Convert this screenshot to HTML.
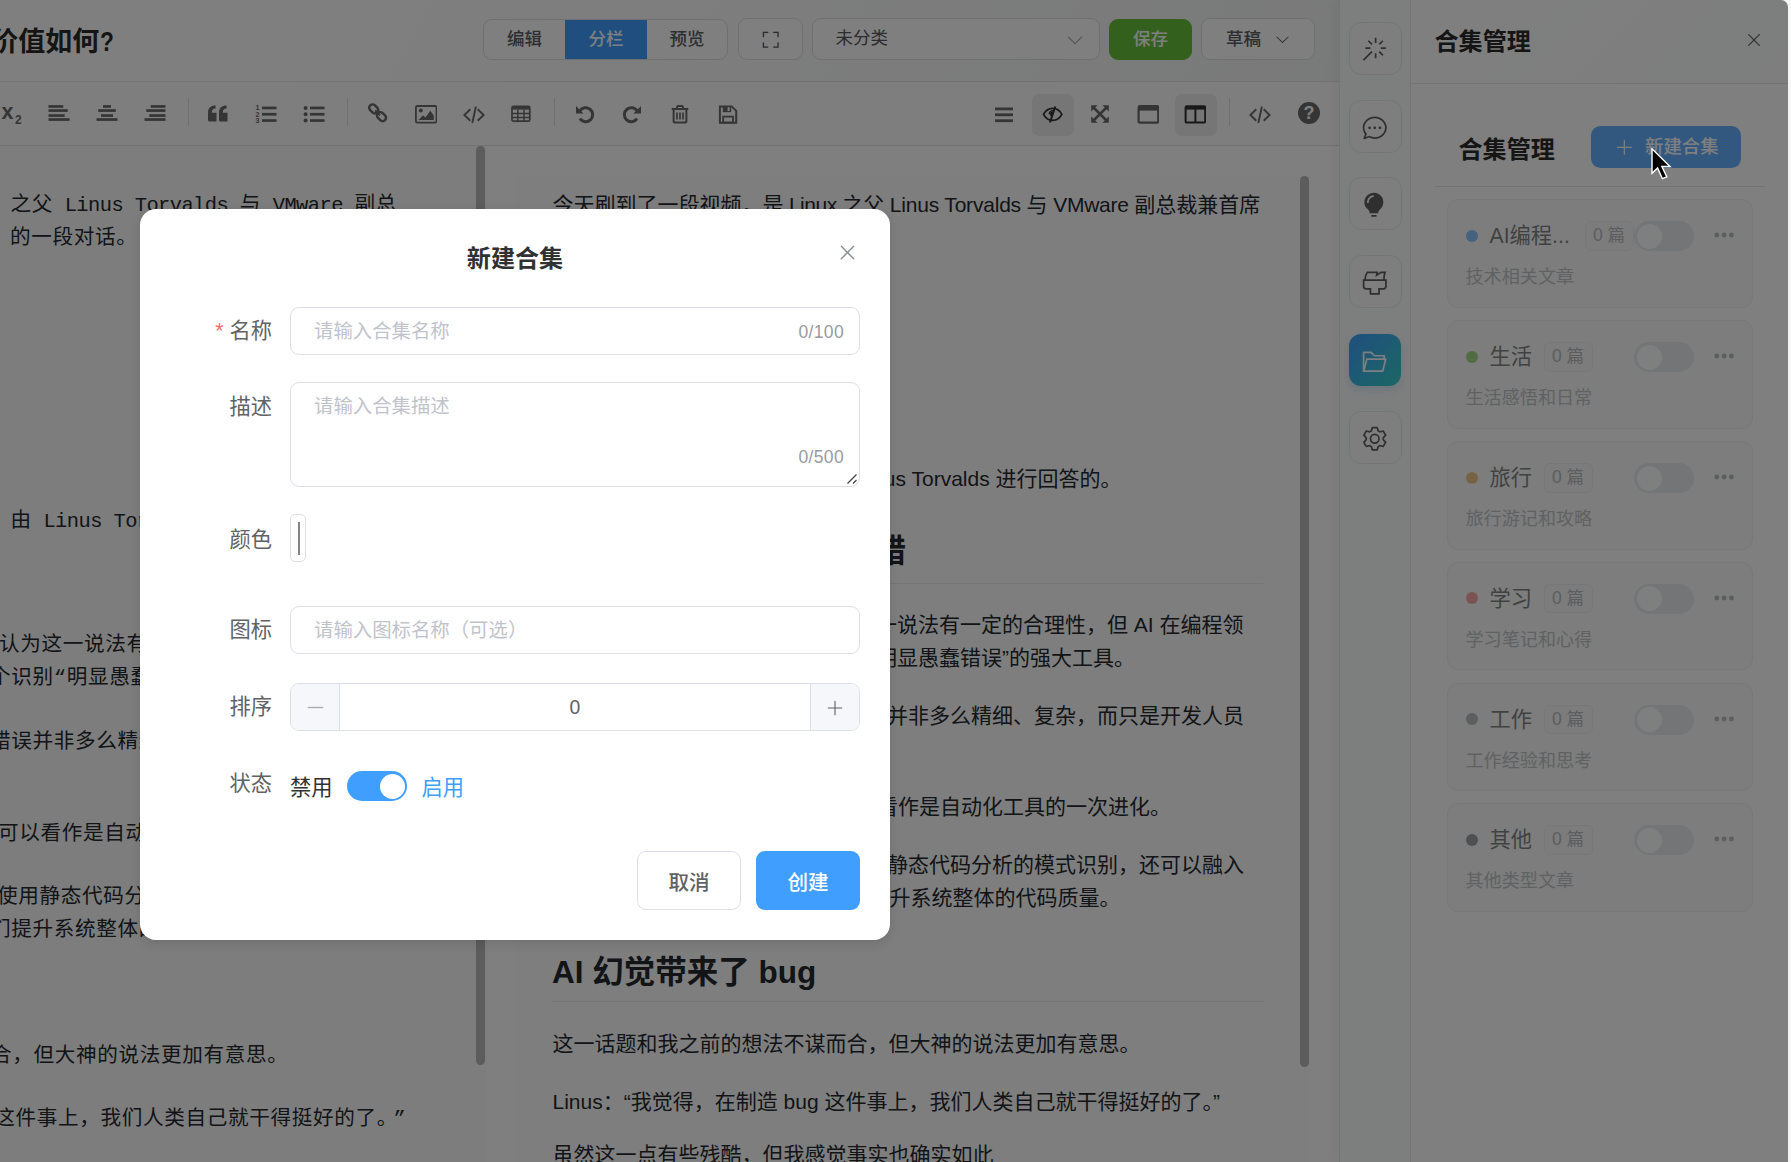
<!DOCTYPE html>
<html lang="zh-CN">
<head>
<meta charset="utf-8">
<title>新建合集</title>
<style>
*{box-sizing:border-box;margin:0;padding:0}
html,body{width:1791px;height:1162px;overflow:hidden;background:#f6f6f6}
body{font-family:"Liberation Sans","Noto Sans CJK SC",sans-serif;position:relative;color:#303133}
.abs{position:absolute}
.app{position:absolute;left:0;top:0;width:1787.8px;height:1162px;background:#fff;overflow:hidden;border-top-right-radius:7px}
.mask{position:absolute;left:0;top:0;width:1787.8px;height:1162px;background:rgba(0,0,0,.5);border-top-right-radius:7px}
svg{display:block}
/* header */
.hdr{position:absolute;left:0;top:0;width:1340px;height:82px;background:linear-gradient(120deg,#ffffff 0%,#fdfdfd 40%,#f3f4f5 100%);border-bottom:1px solid #e4e4e4}
.title{position:absolute;left:-8.7px;top:20px;height:44px;line-height:44px;font-size:27px;font-weight:700;color:#2b2b2b;white-space:nowrap}
.hbtn{position:absolute;top:19px;height:41px;padding-bottom:4px;border:1px solid #dcdfe6;border-radius:9px;background:#fff;font-size:17.5px;color:#5a5d63;font-weight:500;display:flex;align-items:center;justify-content:center;white-space:nowrap}
.grp{position:absolute;left:483px;top:19px;width:245px;height:41px;border:1px solid #dcdfe6;border-radius:9px;background:#fff;overflow:hidden;display:flex;font-size:17.5px;font-weight:500;color:#5a5d63}
.grp div{height:100%;padding-bottom:4px;display:flex;align-items:center;justify-content:center}
/* toolbar */
.tb{position:absolute;left:0;top:82px;width:1340px;height:64px;background:#fdfdfd;border-bottom:1px solid #e4e4e4}
.ti{position:absolute;top:20.5px;width:22px;height:22px;color:#6a6a6a}
.ti svg{width:22px;height:22px}
.tsep{position:absolute;top:16px;width:1px;height:28px;background:#e0e0e0}
.tact{position:absolute;top:12px;width:42px;height:42px;border-radius:7px;background:#ececec}
/* panes */
.left{position:absolute;left:0;top:146px;width:487px;height:1016px;background:#fbfbfb}
.right{position:absolute;left:487px;top:146px;width:853px;height:1016px;background:#fff}
.pv{position:absolute;left:515px;top:176px;width:795px;height:986px;background:#fdfdfd}
.sb{position:absolute;width:9px;border-radius:5px;background:#b8b8b8}
.ml{margin-top:2px;position:absolute;white-space:nowrap;font-family:"Liberation Mono","Noto Sans CJK SC",monospace;font-size:20.6px;letter-spacing:.65px;line-height:33px;height:33px;color:#24292e}
.ml i{font-style:normal;font-size:20.4px;letter-spacing:-.56px}
.pl{margin-top:-1px;position:absolute;white-space:nowrap;font-size:21px;line-height:33px;height:33px;color:#24292e}
.ph{position:absolute;white-space:nowrap;font-size:31.5px;line-height:40px;height:40px;font-weight:700;color:#24292e}
.pl i{font-style:normal;letter-spacing:-.45px}
.phr{position:absolute;left:552px;width:711px;height:1px;background:#eaecef}
/* strip */
.strip{position:absolute;left:1339px;top:0;width:72px;height:1162px;background:#fbfdfc;border-left:1px solid #e9e9e9;border-right:1px solid #e9e9e9;box-shadow:-6px 0 10px rgba(0,0,0,.04)}
.sbtn{position:absolute;left:1348.5px;width:53px;height:53px;padding-top:2.5px;border:1px solid #ebebeb;border-radius:12px;background:#fdfdfd;color:#5f5f5f;display:flex;align-items:center;justify-content:center}
.sbtn svg{width:27.5px;height:27.5px}
.sbtn.on{left:1349px;width:52px;height:52px;border:none;background:linear-gradient(135deg,#409eff,#36cfc9);color:#fff;box-shadow:0 4px 10px rgba(64,158,255,.2)}
/* drawer */
.drw{position:absolute;left:1411px;top:0;width:378px;height:1162px;background:#fcfefd}
.dh{position:absolute;left:0;top:0;width:378px;height:84px;border-bottom:1px solid #e8e8e8;background:linear-gradient(135deg,#ffffff,#fafcfb)}
.card{position:absolute;left:1447px;width:306px;height:108.5px;border:1px solid #e8eaed;border-radius:11px;background:#f6f9f7;opacity:.6}
.card .dot{position:absolute;left:17.5px;top:29.5px;width:12px;height:12px;border-radius:50%}
.card .nm{position:absolute;left:41.5px;top:20px;height:33px;line-height:33px;font-size:21.25px;color:#303133;white-space:nowrap}
.card .tag{position:absolute;top:21px;height:29.5px;width:49px;border:1px solid #e4e6ea;border-radius:6px;background:#f6f7f8;color:#8b8e94;font-size:17.5px;line-height:27.5px;text-align:center;white-space:nowrap}
.card .sw{position:absolute;left:186px;top:21px;width:60px;height:30px;border-radius:15px;background:#dcdfe6}
.card .sw b{position:absolute;left:2.5px;top:2.5px;width:25px;height:25px;border-radius:50%;background:#fff;display:block}
.card .more{position:absolute;left:264.5px;top:28.3px;width:24px;height:14px;color:#8d9095}
.card .ds{position:absolute;left:17.5px;top:62px;height:30px;line-height:30px;font-size:18.1px;color:#999ca2;white-space:nowrap}
/* modal */
.dlg{position:absolute;left:140px;top:209px;width:750px;height:731px;background:#fff;border-radius:16px;box-shadow:0 3px 12px rgba(0,0,0,.12)}
.dt{position:absolute;left:0;top:30px;width:750px;height:40px;line-height:40px;text-align:center;font-size:24.1px;font-weight:700;color:#303133}
.lb{position:absolute;left:0;width:132px;text-align:right;font-size:21.25px;color:#606266;height:40px;line-height:40px;white-space:nowrap}
.lb em{font-style:normal;color:#f56c6c;margin-right:6px;font-family:"Liberation Sans",sans-serif}
.ip{position:absolute;left:150px;width:570px;border:1px solid #dcdfe6;border-radius:9px;background:#fff}
.phd{position:absolute;left:23px;font-size:19.4px;color:#bfc3cb;white-space:nowrap;height:30px;line-height:30px}
.cnt{position:absolute;right:15px;font-size:17.5px;color:#989ba1;height:24px;line-height:24px;letter-spacing:.35px;white-space:nowrap}
.btn{position:absolute;top:642px;width:104px;height:59px;border-radius:9px;font-size:20.6px;font-weight:500;display:flex;align-items:center;justify-content:center}
</style>
</head>
<body>
<div class="app">
<div class="hdr">
<div class="title">价值如何<span style="display:inline-block;transform:scaleX(.84);transform-origin:0 50%;margin-left:1px">?</span></div>
<div class="grp"><div style="width:81px">编辑</div><div style="width:82px;background:#409eff;color:#fff">分栏</div><div style="width:80px">预览</div></div>
<div class="hbtn" style="left:738px;width:65px;top:18px;height:41.5px;padding-bottom:0;padding-top:1px"><svg viewBox="0 0 1024 1024" width="19.5" height="19.5" fill="#5a5d63" stroke="#5a5d63" stroke-width="8"><path d="m160 96.064 192 .192a32 32 0 0 1 0 64l-192-.192V352a32 32 0 0 1-64 0V96h64zm0 831.872V928H96V672a32 32 0 1 1 64 0v191.936l192-.192a32 32 0 1 1 0 64zM864 96.064V96h64v256a32 32 0 1 1-64 0V160.064l-192 .192a32 32 0 1 1 0-64l192-.192zm0 831.872-192-.192a32 32 0 0 1 0-64l192 .192V672a32 32 0 1 1 64 0v256h-64z"/></svg></div>
<div class="hbtn" style="left:812px;width:288px;top:18px;height:41.5px;padding-bottom:4px;justify-content:flex-start;padding-left:22.5px;font-weight:400;color:#55585e">未分类<svg class="abs" style="left:251.5px;top:10.5px" viewBox="0 0 1024 1024" width="20" height="20" fill="#a8abb2"><path d="M831.872 340.864 512 652.672 192.128 340.864a30.592 30.592 0 0 0-42.752 0 29.12 29.12 0 0 0 0 41.6L489.664 714.24a32 32 0 0 0 44.672 0l340.288-331.712a29.12 29.12 0 0 0 0-41.728 30.592 30.592 0 0 0-42.752 0z"/></svg></div>
<div class="hbtn" style="left:1109px;width:83px;background:#67c23a;border-color:#67c23a;color:#fff">保存</div>
<div class="hbtn" style="left:1201px;width:114px;top:18px;height:41.5px;padding-bottom:2px;justify-content:flex-start;padding-left:24px">草稿<svg class="abs" style="right:23.5px;top:11.5px" viewBox="0 0 1024 1024" width="17" height="17" fill="#5a5d63"><path d="M831.872 340.864 512 652.672 192.128 340.864a30.592 30.592 0 0 0-42.752 0 29.12 29.12 0 0 0 0 41.6L489.664 714.24a32 32 0 0 0 44.672 0l340.288-331.712a29.12 29.12 0 0 0 0-41.728 30.592 30.592 0 0 0-42.752 0z"/></svg></div>
</div>
<div class="tb">
<div class="abs" style="left:1.5px;top:15px;font-size:21.5px;font-weight:700;color:#6a6a6a;line-height:30px;white-space:nowrap">x<span style="font-size:12px;position:relative;top:5px;left:1.5px">2</span></div>
<div class="ti" style="left:47.5px"><svg viewBox="0 0 22 22"><g fill="currentColor"><rect x="0.5" y="2.1" width="14.8" height="2.7"/><rect x="0.5" y="6.2" width="19.2" height="2.7"/><rect x="0.5" y="11.2" width="16.2" height="2.7"/><rect x="0.5" y="15.2" width="21" height="2.7"/></g></svg></div>
<div class="ti" style="left:95.5px"><svg viewBox="0 0 22 22"><g fill="currentColor"><rect x="7" y="2.1" width="8" height="2.7"/><rect x="2.2" y="6.2" width="17.6" height="2.7"/><rect x="5" y="11.2" width="12" height="2.7"/><rect x="0.5" y="15.2" width="21" height="2.7"/></g></svg></div>
<div class="ti" style="left:143.5px"><svg viewBox="0 0 22 22"><g fill="currentColor"><rect x="6.7" y="2.1" width="14.8" height="2.7"/><rect x="2.3" y="6.2" width="19.2" height="2.7"/><rect x="5.3" y="11.2" width="16.2" height="2.7"/><rect x="0.5" y="15.2" width="21" height="2.7"/></g></svg></div>
<div class="tsep" style="left:188px"></div>
<div class="ti" style="left:206.5px"><svg viewBox="0 0 22 22"><g fill="currentColor"><path d="M0 10.2C0 4.6 2.8 2.6 7.6 2.6v2.9c-2.6 0-3.7 1.2-3.7 3.6v.6h4.6v8.8H1.6A1.6 1.6 0 0 1 0 16.9z" transform="translate(1,0)"/><path d="M0 10.2C0 4.6 2.8 2.6 7.6 2.6v2.9c-2.6 0-3.7 1.2-3.7 3.6v.6h4.6v8.8H1.6A1.6 1.6 0 0 1 0 16.9z" transform="translate(12,0)"/></g></svg></div>
<div class="ti" style="left:254.5px"><svg viewBox="0 0 22 22"><g fill="currentColor"><rect x="7" y="3.6" width="14.5" height="2.7"/><rect x="7" y="9.9" width="14.5" height="2.7"/><rect x="7" y="16.2" width="14.5" height="2.7"/><text x="0.6" y="6.8" font-size="7.2" font-weight="700" font-family="Liberation Sans, sans-serif">1</text><text x="0.6" y="13.6" font-size="7.2" font-weight="700" font-family="Liberation Sans, sans-serif">2</text><text x="0.6" y="20.4" font-size="7.2" font-weight="700" font-family="Liberation Sans, sans-serif">3</text></g></svg></div>
<div class="ti" style="left:302.5px"><svg viewBox="0 0 22 22"><g fill="currentColor"><circle cx="2.6" cy="4.9" r="2"/><circle cx="2.6" cy="11.2" r="2"/><circle cx="2.6" cy="17.5" r="2"/><rect x="7" y="3.6" width="14.5" height="2.7"/><rect x="7" y="9.9" width="14.5" height="2.7"/><rect x="7" y="16.2" width="14.5" height="2.7"/></g></svg></div>
<div class="tsep" style="left:347px"></div>
<div class="ti" style="left:366.5px"><svg viewBox="0 0 22 22"><g transform="translate(10.6 9.8) scale(.86) rotate(45) translate(-11 -11)" fill="none" stroke="currentColor" stroke-width="2.9"><rect x="-1.2" y="7.1" width="11.6" height="7.8" rx="3.9"/><rect x="11.6" y="7.1" width="11.6" height="7.8" rx="3.9"/><path d="M7 11h8" stroke-width="2.2"/></g></svg></div>
<div class="ti" style="left:414.5px"><svg viewBox="0 0 22 22"><rect x="0.9" y="3" width="20.6" height="16.6" rx="1.6" fill="none" stroke="currentColor" stroke-width="1.8"/><circle cx="5.8" cy="7.6" r="2" fill="currentColor"/><path d="M3.6 16.9l4.4-4.6 2.4 2.2 4.9-6.7 3.5 4.7v4.4z" fill="currentColor"/></svg></div>
<div class="ti" style="left:462.5px"><svg viewBox="0 0 22 22"><g fill="none" stroke="currentColor" stroke-width="1.9"><path d="M7.3 6.3 1.4 12l5.9 5.7M14.7 6.3l5.9 5.7-5.9 5.7M12.9 3.6 9.3 20"/></g></svg></div>
<div class="ti" style="left:509.5px"><svg viewBox="0 0 22 22"><rect x="2" y="3.400" width="17.800" height="14.800" rx="1.500" fill="none" stroke="currentColor" stroke-width="1.700"/><rect x="2" y="3.400" width="17.800" height="3.200" fill="currentColor"/><path d="M2 10.500h17.800M2 14.400h17.800M7.800 6.500v11.700M14 6.500v11.700" stroke="currentColor" stroke-width="1.500" fill="none"/></svg></div>
<div class="tsep" style="left:554px"></div>
<div class="ti" style="left:573.5px"><svg viewBox="0 0 22 22"><path d="M5.6 8.2A7 7 0 1 1 5.9 15.7" fill="none" stroke="currentColor" stroke-width="3"/><path d="M2 3v7.5h7.5z" fill="currentColor"/></svg></div>
<div class="ti" style="left:620.5px"><svg viewBox="0 0 22 22"><g transform="translate(22,0) scale(-1,1)"><path d="M5.6 8.2A7 7 0 1 1 5.9 15.7" fill="none" stroke="currentColor" stroke-width="3"/><path d="M2 3v7.5h7.5z" fill="currentColor"/></g></svg></div>
<div class="ti" style="left:668.5px"><svg viewBox="0 0 22 22"><g fill="none" stroke="currentColor"><path d="M2.7 6h16.6" stroke-width="2"/><path d="M7.6 5.6l1-2.6h4.8l1 2.6" stroke-width="1.8"/><path d="M4.6 6.4V18a1.6 1.6 0 0 0 1.6 1.6h9.6A1.6 1.6 0 0 0 17.400 18V6.400" stroke-width="2"/><path d="M8 9.400v7M11 9.400v7M14 9.400v7" stroke-width="1.7"/></g></svg></div>
<div class="ti" style="left:716.5px"><svg viewBox="0 0 22 22"><path d="M2.9 3.400h11.800l4.500 4.400v12H2.900z" fill="none" stroke="currentColor" stroke-width="2"/><path d="M5.800 3.400h8.400v5.800H5.800z" fill="currentColor"/><rect x="10.600" y="4.200" width="2" height="3.800" fill="#fdfdfd"/><rect x="6.200" y="13.600" width="9.800" height="6" fill="none" stroke="currentColor" stroke-width="1.800"/></svg></div>
<div class="ti" style="left:993px"><svg viewBox="0 0 22 22"><g fill="currentColor"><rect x="2" y="4.500" width="18" height="2.800"/><rect x="2" y="10.400" width="18" height="2.800"/><rect x="2" y="16.300" width="18" height="2.800"/></g></svg></div>
<div class="tact" style="left:1032px"></div>
<div class="ti" style="left:1042px;color:#333"><svg viewBox="0 0 22 22"><g transform="translate(10.700 11.300) scale(.920) translate(-11 -11.500)"><g fill="none" stroke="currentColor" stroke-width="1.900"><path d="M1 11.500C3.500 7 7 5 11 5s7.500 2 10 6.500c-2.500 4.500-6 6.500-10 6.500s-7.500-2-10-6.500z"/><path d="M13.800 3 8 20.400" stroke-width="2.200"/><path d="M7.200 11.500a4 4 0 0 1 4-4" stroke-width="1.600"/></g><path d="M12.800 7.600 10.600 14.600a3.600 3.600 0 0 1-2.200-5z" fill="currentColor"/></g></svg></div>
<div class="ti" style="left:1088.5px"><svg viewBox="0 0 22 22"><g fill="currentColor" stroke="currentColor"><path d="M5 5l12 12M17 5 5 17" stroke-width="2.600" fill="none"/><path d="M2.200 2.200h6.400l-6.400 6.400zM19.800 2.200v6.400l-6.400-6.400zM2.200 19.800v-6.400l6.400 6.400zM19.800 19.800h-6.400l6.400-6.400z" stroke="none"/></g></svg></div>
<div class="ti" style="left:1136.5px"><svg viewBox="0 0 22 22"><rect x="1.600" y="3.200" width="19.600" height="16.400" rx="1.200" fill="none" stroke="currentColor" stroke-width="2.200"/><rect x="1.600" y="3.200" width="19.600" height="4.400" fill="currentColor"/></svg></div>
<div class="tact" style="left:1175px"></div>
<div class="ti" style="left:1184px;color:#333"><svg viewBox="0 0 22 22"><rect x="1.600" y="3.200" width="19.600" height="16.400" rx="1.200" fill="none" stroke="currentColor" stroke-width="2"/><rect x="1.600" y="3.200" width="19.600" height="3.400" fill="currentColor"/><path d="M11.400 6v13" stroke="currentColor" stroke-width="2"/></svg></div>
<div class="tsep" style="left:1229px"></div>
<div class="ti" style="left:1248.5px"><svg viewBox="0 0 22 22"><g fill="none" stroke="currentColor" stroke-width="1.900"><path d="M7.300 6.300 1.400 12l5.900 5.700M14.700 6.300l5.900 5.700-5.900 5.700M12.900 3.600 9.300 20"/></g></svg></div>
<div class="ti" style="left:1298px;top:20px"><svg viewBox="0 0 22 22"><circle cx="11" cy="11" r="11" fill="currentColor"/><text x="11" y="17.400" text-anchor="middle" font-size="18" font-weight="700" fill="#fdfdfd" font-family="Liberation Sans, sans-serif">?</text></svg></div>
</div>
<div class="left"></div><div class="right"></div><div class="pv"></div>
<div class="sb" style="left:476px;top:146px;height:919px"></div>
<div class="sb" style="left:1300px;top:176px;height:891px"></div>
<div class="ml" style="left:10.5px;top:186.5px">之父<i> Linus Torvalds </i>与<i> VMware </i>副总</div>
<div class="ml" style="left:10px;top:219.5px">的一段对话。</div>
<div class="ml" style="left:10.5px;top:502.5px">由<i> Linus Torvalds </i>进行回答的。</div>
<div class="ml" style="left:-1px;top:626.5px">认为这一说法有一定的合理性，但</div>
<div class="ml" style="left:-10px;top:659.5px">个识别“明显愚蠢错误”的强大工具。</div>
<div class="ml" style="left:-10px;top:723.5px">错误并非多么精细、复杂，而只是</div>
<div class="ml" style="left:-2px;top:815.5px">可以看作是自动化工具的一次进化。</div>
<div class="ml" style="left:-3px;top:878.5px">使用静态代码分析的模式识别，还</div>
<div class="ml" style="left:-10px;top:911.5px">们提升系统整体的代码质量。</div>
<div class="ml" style="left:-9px;top:1037.5px">合，但大神的说法更加有意思。</div>
<div class="ml" style="left:-5.75px;top:1100.5px">这件事上，我们人类自己就干得挺好的了。<i style="margin-left:6px">”</i></div>
<div class="pl" style="left:552.5px;top:188.5px">今天刷到了一段视频，是<i> Linux </i>之父<i style="letter-spacing:-.2px"> Linus Torvalds </i>与<i style="letter-spacing:-.25px"> VMware </i>副总裁兼首席</div>
<div class="pl" style="right:666.30px;top:462.5px">以下的这些问题，都是由 Linus Torvalds 进行回答的。</div>
<div class="ph" style="right:881.80px;top:531px">AI 帮我们少犯愚蠢的错</div>
<div class="phr" style="top:583px"></div>
<div class="pl" style="right:544.30px;top:608.5px">有人说这只是炒作，我认为这一说法有一定的合理性，但 AI 在编程领</div>
<div class="pl" style="right:652.80px;top:641.5px">域确实是一个识别“明显愚蠢错误”的强大工具。</div>
<div class="pl" style="right:543.80px;top:699.5px">很多时候，程序里的错误并非多么精细、复杂，而只是开发人员</div>
<div class="pl" style="right:616.80px;top:790.5px">从这个角度来说，AI 可以看作是自动化工具的一次进化。</div>
<div class="pl" style="right:543.80px;top:848.5px">除了使用静态代码分析的模式识别，还可以融入</div>
<div class="pl" style="right:667.30px;top:881.5px">更多上下文，帮我们提升系统整体的代码质量。</div>
<div class="ph" style="left:552px;top:952px">AI 幻觉带来了 bug</div>
<div class="phr" style="top:1001px"></div>
<div class="pl" style="left:552.5px;top:1027.5px">这一话题和我之前的想法不谋而合，但大神的说法更加有意思。</div>
<div class="pl" style="left:552.5px;top:1085.5px">Linus：“我觉得，在制造 bug 这件事上，我们人类自己就干得挺好的了。”</div>
<div class="pl" style="left:552.5px;top:1138.5px">虽然这一点有些残酷，但我感觉事实也确实如此</div>
<div class="strip"></div>
<div class="sbtn" style="top:21.5px"><svg viewBox="0 0 1024 1024" fill="currentColor"><path d="M512 64h64v192h-64zm0 576h64v192h-64zM160 480v-64h192v64zm576 0v-64h192v64zM249.856 199.04l45.248-45.184L430.848 289.6 385.6 334.848 249.856 199.104zM657.152 606.4l45.248-45.248 135.744 135.744-45.248 45.248zM114.048 923.2 68.8 877.952l316.8-316.8 45.248 45.248zM702.4 334.848 657.152 289.6l135.744-135.744 45.248 45.248z"/></svg></div>
<div class="sbtn" style="top:99.5px"><svg viewBox="0 0 1024 1024" fill="currentColor"><path d="m174.72 855.68 135.296-45.12 23.68 11.84C388.096 849.536 448.576 864 512 864c211.84 0 384-166.784 384-352S723.84 160 512 160 128 326.784 128 512c0 69.12 24.96 139.264 70.848 199.232l22.08 28.8-46.272 115.584zm-45.248 82.56A32 32 0 0 1 89.6 896l58.368-145.92C94.72 680.32 64 596.864 64 512 64 299.904 256 96 512 96s448 203.904 448 416-192 416-448 416a461.056 461.056 0 0 1-206.912-48.384l-175.616 58.56z"/><path d="M512 563.2a51.200 51.200 0 1 1 0-102.400 51.200 51.200 0 0 1 0 102.400m192 0a51.200 51.200 0 1 1 0-102.400 51.200 51.200 0 0 1 0 102.400m-384 0a51.200 51.200 0 1 1 0-102.400 51.200 51.200 0 0 1 0 102.400"/></svg></div>
<div class="sbtn" style="top:177px"><svg viewBox="0 0 1024 1024" fill="currentColor"><path d="M384 960v-64h192.064v64zm448-544a350.656 350.656 0 0 1-128.320 271.424C665.344 719.040 640 763.776 640 813.504V832H320v-14.336c0-48-19.392-95.360-57.216-124.992a351.552 351.552 0 0 1-128.448-344.256c25.344-136.448 133.888-248.128 269.760-276.480A352.384 352.384 0 0 1 832 416m-544 32c0-132.288 75.904-224 192-224v-64c-154.432 0-256 122.752-256 288z"/></svg></div>
<div class="sbtn" style="top:255px"><svg viewBox="0 0 1024 1024" fill="currentColor"><path d="M896 448H128v192a64 64 0 0 0 64 64h192v192h256V704h192a64 64 0 0 0 64-64zm-770.752-64c0-47.552 5.248-90.240 15.552-128 14.720-54.016 42.496-107.392 83.200-160h417.280l-15.360 70.336L736 96h211.200c-24.832 42.880-41.920 96.256-51.200 160a663.872 663.872 0 0 0-6.144 128H960v256a128 128 0 0 1-128 128H704v160a32 32 0 0 1-32 32H352a32 32 0 0 1-32-32V768H192A128 128 0 0 1 64 640V384zm64 0h636.544c-2.048-45.824.256-91.584 6.848-137.216 4.480-30.848 10.688-59.776 18.688-86.784h-96.640l-221.120 141.248L561.920 160H256.512c-25.856 37.888-43.776 75.456-53.952 112.832-8.768 32.064-13.248 69.120-13.312 111.168z"/></svg></div>
<div class="sbtn on" style="top:334px"><svg viewBox="0 0 1024 1024" fill="currentColor"><path d="M878.080 448H241.920l-96 384h636.160l96-384zM832 384v-64H485.760L357.504 192H128v448l57.920-231.744A32 32 0 0 1 216.960 384zm-24.960 512H96a32 32 0 0 1-32-32V160a32 32 0 0 1 32-32h287.872l128.384 128H864a32 32 0 0 1 32 32v96h23.040a32 32 0 0 1 31.040 39.744l-112 448A32 32 0 0 1 807.040 896"/></svg></div>
<div class="sbtn" style="top:411px"><svg viewBox="0 0 1024 1024" fill="currentColor"><path d="M600.704 64a32 32 0 0 1 30.464 22.208l35.200 109.376c14.784 7.232 28.928 15.360 42.432 24.512l112.384-24.192a32 32 0 0 1 34.432 15.360L944.320 364.800a32 32 0 0 1-4.032 37.504l-77.120 85.120a357.120 357.120 0 0 1 0 49.024l77.120 85.248a32 32 0 0 1 4.032 37.504l-88.704 153.600a32 32 0 0 1-34.432 15.296L708.800 803.904c-13.440 9.088-27.648 17.280-42.368 24.512l-35.264 109.376A32 32 0 0 1 600.704 960H423.296a32 32 0 0 1-30.464-22.208L357.696 828.480a351.616 351.616 0 0 1-42.560-24.640l-112.320 24.256a32 32 0 0 1-34.432-15.360L79.680 659.200a32 32 0 0 1 4.032-37.504l77.120-85.248a357.120 357.120 0 0 1 0-48.896l-77.120-85.248A32 32 0 0 1 79.680 364.800l88.704-153.600a32 32 0 0 1 34.432-15.296l112.320 24.256c13.568-9.152 27.776-17.408 42.560-24.640l35.200-109.312A32 32 0 0 1 423.232 64H600.640zm-23.424 64H446.720l-36.352 113.088-24.512 11.968a294.113 294.113 0 0 0-34.816 20.096l-22.656 15.360-116.224-25.088-65.280 113.152 79.680 88.192-1.920 27.136a293.120 293.120 0 0 0 0 40.192l1.920 27.136-79.808 88.192 65.344 113.152 116.224-25.024 22.656 15.296a294.113 294.113 0 0 0 34.816 20.096l24.512 11.968L446.720 896h130.688l36.480-113.152 24.448-11.904a288.282 288.282 0 0 0 34.752-20.096l22.592-15.296 116.288 25.024 65.280-113.152-79.744-88.192 1.920-27.136a293.120 293.120 0 0 0 0-40.256l-1.920-27.136 79.808-88.128-65.344-113.152-116.288 24.960-22.592-15.168a287.616 287.616 0 0 0-34.752-20.096l-24.448-11.904L577.344 128zM512 320a192 192 0 1 1 0 384 192 192 0 0 1 0-384m0 64a128 128 0 1 0 0 256 128 128 0 0 0 0-256"/></svg></div>
<div class="drw"><div class="dh"></div></div>
<div class="abs" style="left:1434.5px;top:21px;height:42px;line-height:42px;font-size:24.1px;font-weight:700;color:#2a2a2a;white-space:nowrap">合集管理</div>
<svg class="abs" style="left:1744px;top:29.5px" width="20" height="20" viewBox="0 0 1024 1024" fill="#6b6b6b"><path d="M764.288 214.592 512 466.880 259.712 214.592a31.936 31.936 0 0 0-45.120 45.120L466.752 512 214.528 764.224a31.936 31.936 0 1 0 45.120 45.184L512 557.184l252.288 252.288a31.936 31.936 0 0 0 45.120-45.120L557.120 512.064l252.288-252.352a31.936 31.936 0 1 0-45.120-45.184z"/></svg>
<div class="abs" style="left:1458.5px;top:128.5px;height:42px;line-height:42px;font-size:24.1px;font-weight:700;color:#2a2a2a;white-space:nowrap">合集管理</div>
<div class="abs" style="left:1591px;top:126px;width:150px;height:42px;border-radius:9.5px;background:#66b1ff;color:#fff;font-size:18.4px;font-weight:500;line-height:42px;white-space:nowrap"><svg class="abs" style="left:23.5px;top:12px" width="18.7" height="18.7" viewBox="0 0 1024 1024" fill="currentColor"><path d="M480 480V128a32 32 0 0 1 64 0v352h352a32 32 0 1 1 0 64H544v352a32 32 0 1 1-64 0V544H128a32 32 0 0 1 0-64z"/></svg><span class="abs" style="left:54px;top:0">新建合集</span></div>
<div class="abs" style="left:1435px;top:186px;width:330px;height:1px;background:#e6e8ec"></div>
<div class="card" style="top:199px"><div class="dot" style="background:#409eff"></div><div class="nm">AI编程...</div><div class="tag" style="left:136.5px">0 篇</div><div class="sw"><b></b></div><svg class="more" viewBox="0 0 24 14" fill="currentColor"><circle cx="3.800" cy="7" r="2.450"/><circle cx="11.100" cy="7" r="2.450"/><circle cx="18.400" cy="7" r="2.450"/></svg><div class="ds">技术相关文章</div></div>
<div class="card" style="top:320px"><div class="dot" style="background:#67c23a"></div><div class="nm">生活</div><div class="tag" style="left:95.5px">0 篇</div><div class="sw"><b></b></div><svg class="more" viewBox="0 0 24 14" fill="currentColor"><circle cx="3.800" cy="7" r="2.450"/><circle cx="11.100" cy="7" r="2.450"/><circle cx="18.400" cy="7" r="2.450"/></svg><div class="ds">生活感悟和日常</div></div>
<div class="card" style="top:441px"><div class="dot" style="background:#e6a23c"></div><div class="nm">旅行</div><div class="tag" style="left:95.5px">0 篇</div><div class="sw"><b></b></div><svg class="more" viewBox="0 0 24 14" fill="currentColor"><circle cx="3.800" cy="7" r="2.450"/><circle cx="11.100" cy="7" r="2.450"/><circle cx="18.400" cy="7" r="2.450"/></svg><div class="ds">旅行游记和攻略</div></div>
<div class="card" style="top:561.5px"><div class="dot" style="background:#f56c6c"></div><div class="nm">学习</div><div class="tag" style="left:95.5px">0 篇</div><div class="sw"><b></b></div><svg class="more" viewBox="0 0 24 14" fill="currentColor"><circle cx="3.800" cy="7" r="2.450"/><circle cx="11.100" cy="7" r="2.450"/><circle cx="18.400" cy="7" r="2.450"/></svg><div class="ds">学习笔记和心得</div></div>
<div class="card" style="top:682.5px"><div class="dot" style="background:#909399"></div><div class="nm">工作</div><div class="tag" style="left:95.5px">0 篇</div><div class="sw"><b></b></div><svg class="more" viewBox="0 0 24 14" fill="currentColor"><circle cx="3.800" cy="7" r="2.450"/><circle cx="11.100" cy="7" r="2.450"/><circle cx="18.400" cy="7" r="2.450"/></svg><div class="ds">工作经验和思考</div></div>
<div class="card" style="top:803px"><div class="dot" style="background:#606266"></div><div class="nm">其他</div><div class="tag" style="left:95.5px">0 篇</div><div class="sw"><b></b></div><svg class="more" viewBox="0 0 24 14" fill="currentColor"><circle cx="3.800" cy="7" r="2.450"/><circle cx="11.100" cy="7" r="2.450"/><circle cx="18.400" cy="7" r="2.450"/></svg><div class="ds">其他类型文章</div></div>
</div>
<div class="mask"></div>
<div class="dlg">
<div class="dt">新建合集</div>
<svg class="abs" style="left:695.5px;top:31.5px" width="23" height="23" viewBox="0 0 1024 1024" fill="#8a8d93"><path d="M764.288 214.592 512 466.880 259.712 214.592a31.936 31.936 0 0 0-45.120 45.120L466.752 512 214.528 764.224a31.936 31.936 0 1 0 45.120 45.184L512 557.184l252.288 252.288a31.936 31.936 0 0 0 45.120-45.120L557.120 512.064l252.288-252.352a31.936 31.936 0 1 0-45.120-45.184z"/></svg>
<div class="lb" style="top:101.5px"><em>*</em>名称</div>
<div class="ip" style="top:98px;height:48px"><div class="phd" style="top:8px">请输入合集名称</div><div class="cnt" style="top:12px">0/100</div></div>
<div class="lb" style="top:178px">描述</div>
<div class="ip" style="top:173px;height:105px"><div class="phd" style="top:8px">请输入合集描述</div><div class="cnt" style="top:61.5px">0/500</div><svg class="abs" style="right:1px;bottom:1px" width="12" height="12" viewBox="0 0 12 12" fill="none" stroke="#444" stroke-width="1.3"><path d="M10.500 1.500 1.500 10.500M10.500 7 7 10.500"/></svg></div>
<div class="lb" style="top:311px">颜色</div>
<div class="abs" style="left:150px;top:305px;width:16px;height:48px;border:1px solid #dcdfe6;border-radius:5px"><div class="abs" style="left:6.500px;top:6.500px;width:2px;height:33px;background:#858585"></div></div>
<div class="lb" style="top:400.5px">图标</div>
<div class="ip" style="top:397px;height:48px"><div class="phd" style="top:8px">请输入图标名称（可选）</div></div>
<div class="lb" style="top:477.5px">排序</div>
<div class="ip" style="top:474px;height:48px;overflow:hidden"><div class="abs" style="left:0;top:0;width:48.500px;height:46px;background:#f5f7fa;border-right:1px solid #dcdfe6"><svg class="abs" style="left:15px;top:13.500px" width="19" height="19" viewBox="0 0 1024 1024" fill="#a8abb2" stroke="#a8abb2" stroke-width="14"><path d="M128 544h768a32 32 0 1 0 0-64H128a32 32 0 0 0 0 64"/></svg></div><div class="abs" style="left:49px;top:0;width:470px;height:46px;line-height:46px;text-align:center;font-size:19.400px;color:#606266">0</div><div class="abs" style="right:0;top:0;width:49px;height:46px;background:#f5f7fa;border-left:1px solid #dcdfe6"><svg class="abs" style="left:15px;top:14.500px" width="18" height="18" viewBox="0 0 1024 1024" fill="#606266"><path d="M480 480V128a32 32 0 0 1 64 0v352h352a32 32 0 1 1 0 64H544v352a32 32 0 1 1-64 0V544H128a32 32 0 0 1 0-64z"/></svg></div></div>
<div class="lb" style="top:555px">状态</div>
<div class="abs" style="left:150px;top:563px;height:32px;line-height:32px;font-size:21.25px;color:#303133;white-space:nowrap">禁用</div>
<div class="abs" style="left:207px;top:562px;width:60px;height:30px;border-radius:15px;background:#409eff"><div class="abs" style="right:2.500px;top:2.500px;width:25px;height:25px;border-radius:50%;background:#fff"></div></div>
<div class="abs" style="left:281.500px;top:563px;height:32px;line-height:32px;font-size:21.25px;color:#409eff;white-space:nowrap">启用</div>
<div class="btn" style="left:497px;border:1px solid #dcdfe6;color:#606266;background:#fff">取消</div>
<div class="btn" style="left:616px;background:#409eff;color:#fff">创建</div>
</div>
<svg class="abs" style="left:1651px;top:148px" width="22" height="34" viewBox="0 0 22 34"><path d="M1 0.800V25.300L6.600 19.900 11.400 30.700 15.800 28.900 10.900 18.500H19z" fill="#000" stroke="#fff" stroke-width="1.400" stroke-linejoin="miter"/></svg>
</body>
</html>
